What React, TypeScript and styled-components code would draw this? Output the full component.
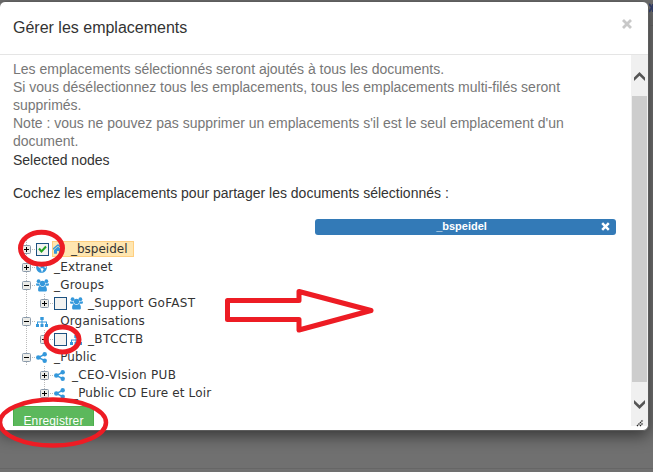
import React from "react";
import styled, { createGlobalStyle } from "styled-components";
import { FaGlobeAmericas, FaHome } from "react-icons/fa";

const GlobalStyle = createGlobalStyle`
  * { box-sizing: border-box; }
  html, body { margin: 0; }
  body { background: #707070; overflow: hidden; font-family: "Liberation Sans", Arial, sans-serif; }
`;

const Page = styled.main`
  position: relative;
  width: 653px;
  height: 472px;
  padding-top: 1px;
  overflow: hidden;
  background: linear-gradient(#707070 468px, #666 468px, #666 469px, #707070 469px);
`;

const Modal = styled.section`
  display: flex;
  flex-direction: column;
  width: 650px;
  height: 430px;
  margin-left: -1px;
  background: #fff;
  border: 1px solid #5d5d5d;
  border-radius: 6px;
  box-shadow: 0 5px 15px rgba(0, 0, 0, 0.5);
`;

const Header = styled.header`
  display: flex;
  flex: 0 0 53px;
  justify-content: space-between;
  padding: 15px 15px 0 13px;
  border-bottom: 1px solid #e5e5e5;
`;

const Title = styled.h4`
  margin: 1px 0 0;
  color: #333;
  font-size: 16px;
  font-weight: 400;
  line-height: 20px;
`;

const Close = styled.button`
  height: 12px;
  padding: 0;
  border: 0;
  background: none;
  line-height: 0;
`;

const BodyRow = styled.div`
  display: flex;
  height: 371px;
`;

const Content = styled.div`
  flex: 1;
  padding: 5px 17px 0 13px;
  overflow: hidden;
  color: #333;
  font-size: 14px;
`;

const Help = styled.p`
  margin: 0;
  color: #777;
  line-height: 18px;
  white-space: nowrap;
`;

const Plain = styled.p<{ $gap?: number }>`
  margin: ${(p) => p.$gap ?? 0}px 0 0;
  line-height: 20px;
  white-space: nowrap;
`;

const Selected = styled.div`
  display: flex;
  align-items: center;
  width: 301px;
  height: 16px;
  margin: 16px 0 5px 302px;
  padding: 0 6px 2px 7px;
  border-radius: 3px;
  background: #337ab7;
  color: #fff;
  font-size: 11px;
  font-weight: 700;
  line-height: 14px;
`;

const SelectedName = styled.span`
  flex: 1;
  text-align: center;
`;

const Tree = styled.div`
  display: flex;
  flex-direction: column;
  padding-left: 9px;
`;

const Row = styled.div<{ $level: number }>`
  display: flex;
  align-items: center;
  height: 18px;
  padding-left: ${(p) => p.$level * 18}px;
`;

const Branch = styled.div<{ $level: number; $length: number }>`
  background: repeating-linear-gradient(#bbb 0 1px, transparent 1px 2px)
    ${(p) => p.$level * 18 + 4}px 0 / 1px ${(p) => p.$length}px no-repeat;
`;

const Expander = styled.svg`
  flex: none;
  width: 9px;
  height: 9px;
`;

const Dots = styled.span`
  width: 5px;
  height: 1px;
  background: repeating-linear-gradient(90deg, transparent 0 1px, #bbb 1px 2px);
`;

const Check = styled.svg`
  flex: none;
  width: 13px;
  height: 13px;
  margin-right: 3px;
`;

const Label = styled.span<{ $active?: boolean }>`
  display: flex;
  align-items: center;
  height: ${(p) => (p.$active ? 16 : 18)}px;
  padding-right: ${(p) => (p.$active ? 6 : 0)}px;
  background: ${(p) => (p.$active ? "#ffe6b0" : "transparent")};
  outline: ${(p) => (p.$active ? "1px solid #ffcf80" : "none")};
  outline-offset: -1px;
`;

const IconBox = styled.span<{ $w: number }>`
  display: flex;
  align-items: center;
  width: ${(p) => p.$w}px;
  color: #3498db;
`;

const Name = styled.span<{ $spacing: number }>`
  padding-top: 1px;
  font-family: "DejaVu Sans", Verdana, sans-serif;
  font-size: 12px;
  line-height: 17px;
  letter-spacing: ${(p) => p.$spacing}px;
  white-space: nowrap;
`;

const Save = styled.button`
  display: block;
  width: 81px;
  height: 30px;
  margin: 4px 0 0;
  padding: 0;
  border: 1px solid #4cae4c;
  border-radius: 3px;
  background: #5cb85c;
  color: #fff;
  font: 12px/28px "Liberation Sans", Arial, sans-serif;
  letter-spacing: 0.12px;
`;

const Scrollbar = styled.div`
  display: flex;
  flex: 0 0 17px;
  flex-direction: column;
  align-items: center;
  background: #f0f0f0;
`;

const ScrollEnd = styled.div<{ $h: number; $pad: number }>`
  height: ${(p) => p.$h}px;
  padding-top: ${(p) => p.$pad}px;
  line-height: 0;
`;

const Thumb = styled.div`
  width: 15px;
  height: 286px;
  background: #cdcdcd;
`;

const Overlay = styled.svg`
  position: absolute;
  inset: 0;
  pointer-events: none;
`;

const PageEdge = styled.svg`
  position: absolute;
  top: 0;
  left: 649px;
`;

type Kind = "home" | "globe" | "users" | "sitemap" | "share";
type Node = {
  name: string;
  kind: Kind;
  level: number;
  open?: boolean;
  check?: "on" | "off";
  w?: number;
  spacing: number;
};

const nodes: Node[] = [
  { name: "_bspeidel", kind: "home", level: 0, check: "on", w: 19, spacing: 0 },
  { name: "_Extranet", kind: "globe", level: 0, spacing: 0.15 },
  { name: "_Groups", kind: "users", level: 0, open: true, spacing: 0.2 },
  { name: "_Support GoFAST", kind: "users", level: 1, check: "off", spacing: 0.3 },
  { name: "_Organisations", kind: "sitemap", level: 0, open: true, spacing: 0.15 },
  { name: "_BTCCTB", kind: "sitemap", level: 1, check: "off", spacing: 0.35 },
  { name: "_Public", kind: "share", level: 0, open: true, spacing: 0.15 },
  { name: "_CEO-VIsion PUB", kind: "share", level: 1, spacing: 0.3 },
  { name: "_Public CD Eure et Loir", kind: "share", level: 1, spacing: 0.15 },
];

const icons: Record<Kind, React.ReactNode> = {
  home: <FaHome size={12} />,
  globe: <FaGlobeAmericas size={11} />,
  users: (
    <svg width="13" height="13" viewBox="0 0 13 13" fill="currentColor">
      <circle cx="2.6" cy="2.2" r="1.9" />
      <circle cx="10.4" cy="2.2" r="1.9" />
      <circle cx="6.5" cy="4.4" r="2.6" />
      <path d="M0 4.500h3.400c0 1 .3 1.700.8 2.300H1.200C.4 6.800 0 6 0 4.500zM13 4.500H9.600c0 1-.3 1.700-.8 2.300h3c.8 0 1.200-.8 1.200-2.300zM4 7c1.500 1.100 3.500 1.100 5 0 1.300.2 1.900 1.600 1.900 3.900 0 1.100-.7 1.700-1.700 1.700H3.800c-1 0-1.700-.6-1.700-1.700C2.100 8.600 2.700 7.200 4 7z" />
    </svg>
  ),
  sitemap: (
    <svg width="12" height="11" viewBox="0 0 12 11" fill="currentColor">
      <path d="M4.300 1h3.400v3H6.500v1.500H11V8h1v3H9V8h1V6.500H6.500V8h1v3h-3V8h1V6.500H2V8h1v3H0V8h1V5.500h4.500V4H4.300z" />
    </svg>
  ),
  share: (
    <svg width="11" height="11" viewBox="0 0 11 11" fill="currentColor">
      <circle cx="2.3" cy="5.5" r="2.3" />
      <circle cx="8.7" cy="2.3" r="2.2" />
      <circle cx="8.7" cy="8.7" r="2.2" />
      <path d="M8.700 2.300L2.300 5.500l6.400 3.200" fill="none" stroke="currentColor" strokeWidth="1.500" />
    </svg>
  ),
};

function TreeRow({ node, parentLine }: { node: Node; parentLine: number }) {
  return (
    <Branch $level={0} $length={node.name === "_CEO-VIsion PUB" || node.name === "_Public CD Eure et Loir" ? 0 : 18}>
      <Branch $level={1} $length={parentLine}>
        <Row $level={node.level}>
          <Expander viewBox="0 0 9 9">
            <rect x=".5" y=".5" width="8" height="8" rx="1" fill="#ecece8" stroke="#8a9aab" />
            <path d={node.open ? "M2 4.500h5" : "M2 4.500h5M4.500 2v5"} stroke="#000" />
          </Expander>
          <Dots />
          {node.check && (
            <Check viewBox="0 0 13 13">
              <rect x=".5" y=".5" width="12" height="12" fill="#f3f3f1" stroke="#1c5180" />
              {node.check === "on" && (
                <path d="M3 5.500l2.500 3L10 3.500" fill="none" stroke="#21a121" strokeWidth="2" />
              )}
            </Check>
          )}
          <Label $active={node.check === "on"}>
            <IconBox $w={node.w ?? 18}>{icons[node.kind]}</IconBox>
            <Name $spacing={node.spacing}>{node.name}</Name>
          </Label>
        </Row>
      </Branch>
    </Branch>
  );
}

export default function App() {
  return (
    <>
      <GlobalStyle />
      <Page>
        <Modal>
          <Header>
            <Title>Gérer les emplacements</Title>
            <Close aria-label="Fermer">
              <svg width="12" height="14" viewBox="0 0 12 14">
                <path d="M2 3l8 8M10 3l-8 8" stroke="#c8c8c8" strokeWidth="2.800" />
              </svg>
            </Close>
          </Header>
          <BodyRow>
            <Content>
              <Help>
                Les emplacements sélectionnés seront ajoutés à tous les documents.
                <br />
                Si vous désélectionnez tous les emplacements, tous les emplacements multi-filés seront
                <br />
                supprimés.
                <br />
                Note : vous ne pouvez pas supprimer un emplacements s'il est le seul emplacement d'un
                <br />
                document.
              </Help>
              <Plain>Selected nodes</Plain>
              <Plain $gap={13}>Cochez les emplacements pour partager les documents sélectionnés :</Plain>
              <Selected>
                <SelectedName>_bspeidel</SelectedName>
                <svg width="9" height="9" viewBox="0 0 9 9">
                  <path d="M1.200 1.200l6.600 6.600M7.800 1.200L1.200 7.800" stroke="#fff" strokeWidth="2.500" />
                </svg>
              </Selected>
              <Tree>
                {nodes.map((n, i) => (
                  <TreeRow
                    key={n.name}
                    node={n}
                    parentLine={n.level === 0 ? 0 : nodes[i + 1]?.level === 1 ? 18 : 9}
                  />
                ))}
              </Tree>
              <Save>Enregistrer</Save>
            </Content>
            <Scrollbar>
              <ScrollEnd $h={41} $pad={17}>
                <svg width="11" height="9" viewBox="0 0 11 9">
                  <path d="M0 5.500L5.500 0 11 5.500V9L5.500 3.800 0 9z" fill="#555" />
                </svg>
              </ScrollEnd>
              <Thumb />
              <ScrollEnd $h={44} $pad={18}>
                <svg width="11" height="27" viewBox="0 0 11 27">
                  <path d="M0 3.500L5.500 9 11 3.500V0L5.500 5.200 0 0z" fill="#555" />
                  <path d="M3 26l6-6M6 26l3-3" stroke="#222" strokeWidth="1.300" strokeDasharray="1.400 .7" />
                </svg>
              </ScrollEnd>
            </Scrollbar>
          </BodyRow>
        </Modal>
        <PageEdge width="4" height="30" viewBox="0 0 4 30">
          <path d="M0 4l3 3.500L0 12M4 4v8" stroke="#303b63" strokeWidth="2" fill="none" />
          <path d="M0 25.500h4" stroke="#555" />
        </PageEdge>
        <Overlay
          width="653"
          height="472"
          viewBox="0 0 653 472"
          fill="none"
          stroke="#ed1c24"
          strokeWidth="5"
          strokeLinejoin="round"
        >
          <ellipse cx="41.500" cy="248.200" rx="21" ry="16" />
          <ellipse cx="62.500" cy="339.500" rx="16.500" ry="12.500" />
          <ellipse cx="53" cy="422.500" rx="53" ry="23" strokeWidth="4.500" />
          <path d="M227.500 300.500H299V291.500L371 310.500L299 330V319.500H227.500Z" />
        </Overlay>
      </Page>
    </>
  );
}
